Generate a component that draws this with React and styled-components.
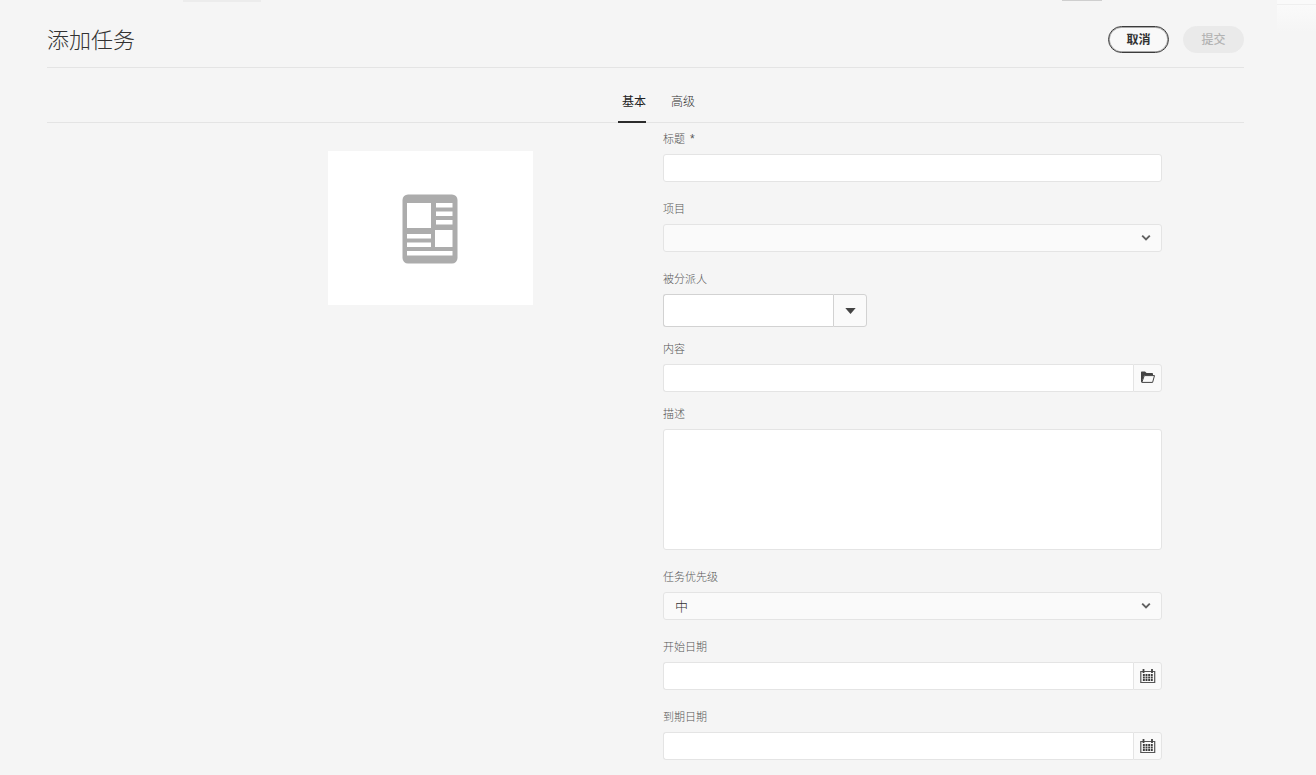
import React from "react";
import styled, { createGlobalStyle } from "styled-components";

const line = "#e4e4e4";
const ink = "#323232";

const GlobalStyle = createGlobalStyle`
  *, *::before, *::after { box-sizing: border-box; }
  body {
    margin: 0;
    background: #f5f5f5;
    color: ${ink};
    font-family: "Noto Sans CJK SC", "Liberation Sans", sans-serif;
    font-size: 12px;
    font-weight: 300;
  }
  button, input, select, textarea { font: inherit; color: inherit; }
`;

const Page = styled.div`
  position: relative;
  padding: 0 72px 14px 47px;
`;

const TopEdge = styled.div`
  position: absolute;
  top: 0;
  left: 0;
  right: 0;
  display: flex;
  align-items: flex-start;
  padding-left: 183px;
  pointer-events: none;
`;

const EdgeMark = styled.span`
  width: ${(p) => p.$width}px;
  height: ${(p) => p.$height}px;
  margin-left: ${(p) => (p.$end ? "auto" : 0)};
  background: ${(p) => p.$color};
`;

const EdgePanel = styled.span`
  width: 39px;
  height: 32px;
  margin-left: 175px;
  background: linear-gradient(#fafafa, #f5f5f5);
  border-top: 4px solid #fafafa;
  box-shadow: inset 0 1px #efefef;
`;

const Header = styled.header`
  display: flex;
  align-items: center;
  justify-content: space-between;
  height: 68px;
  padding-top: 12px;
  border-bottom: 1px solid ${line};
`;

const Title = styled.h1`
  margin: 0;
  padding-bottom: 4px;
  font-size: 22px;
  line-height: 32px;
  font-weight: 300;
`;

const Actions = styled.div`
  display: flex;
  gap: 14px;
`;

const PillButton = styled.button`
  width: 61px;
  height: 27px;
  padding: 0 0 2px;
  border: 1px solid #3c3c3c;
  border-radius: 14px;
  background: #f9f9f9;
  box-shadow: inset 0 0 0 1px #a8a8a8;
  color: ${ink};
  font-size: 12px;
  line-height: 16px;
  font-weight: 700;

  &:disabled {
    border-color: #eaeaea;
    background: #eaeaea;
    box-shadow: none;
    color: #b3b3b3;
    font-weight: 500;
  }
`;

const Tabs = styled.div`
  display: flex;
  justify-content: center;
  gap: 21px;
  height: 55px;
  padding-left: 22px;
  border-bottom: 1px solid ${line};
`;

const Tab = styled.button`
  height: 55px;
  padding: 13px 0 0 4px;
  border: 0;
  border-bottom: 2px solid ${(p) => (p["aria-selected"] ? "#2c2c2c" : "transparent")};
  background: none;
  font-size: 12px;
  line-height: 18px;
  font-weight: ${(p) => (p["aria-selected"] ? 400 : 300)};
  color: ${(p) => (p["aria-selected"] ? "#222" : "#333")};
`;

const Body = styled.main`
  display: grid;
  grid-template-columns: 616fr 499fr;
  padding: 7px 82px 0 0;
`;

const Preview = styled.div`
  display: flex;
  align-items: center;
  justify-content: center;
  justify-self: end;
  width: 205px;
  height: 154px;
  margin: 21px 130px 0 0;
  padding: 2px 1px 0 0;
  background: #fff;
`;

const Form = styled.form`
  min-width: 0;
`;

const Field = styled.div`
  display: flex;
  flex-direction: column;
  gap: 8px;
  margin-bottom: ${(p) => (p.$tight ? 13 : 18)}px;

  &:last-child { margin-bottom: 0; }
`;

const Label = styled.label`
  font-size: 11px;
  line-height: 16px;
  color: #555;
`;

const Required = styled.span`
  margin-left: 5px;
  font-family: "Liberation Sans", sans-serif;
  font-size: 12px;
  line-height: 12px;
`;

const Control = styled.div`
  position: relative;
  display: flex;
  width: ${(p) => (p.$compact ? "204px" : "100%")};
  height: ${(p) => (p.$compact ? 33 : 28)}px;
`;

const TextInput = styled.input`
  flex: 1;
  min-width: 0;
  padding: 0 11px;
  border: 1px solid ${(p) => (p.$strong ? "#d2d2d2" : line)};
  border-right-width: ${(p) => (p.$joined ? 0 : 1)}px;
  border-radius: ${(p) => (p.$joined ? "3px 0 0 3px" : "3px")};
  background: #fff;
`;

const SideButton = styled.button`
  display: flex;
  align-items: center;
  justify-content: center;
  width: ${(p) => (p.$strong ? 34 : 29)}px;
  padding: 0;
  border: 1px solid ${(p) => (p.$strong ? "#d2d2d2" : line)};
  border-radius: 0 3px 3px 0;
  background: #fafafa;
`;

const Select = styled.select`
  width: 100%;
  padding: 0 32px 2px 11px;
  border: 1px solid ${line};
  border-radius: 3px;
  background: #fafafa;
  appearance: none;
  font-size: 13px;
  opacity: 1;
`;

const SelectArrow = styled.svg`
  position: absolute;
  right: 11px;
  top: 10px;
  pointer-events: none;
`;

const TextArea = styled.textarea`
  display: block;
  width: 100%;
  height: 121px;
  padding: 6px 11px;
  border: 1px solid ${line};
  border-radius: 3px;
  background: #fff;
  resize: none;
`;

const Chevron = () => (
  <SelectArrow width="10" height="8" viewBox="0 0 10 8" aria-hidden="true">
    <path d="M1.2 1.6 5 5.4 8.800 1.6" fill="none" stroke="#606060" strokeWidth="1.9" />
  </SelectArrow>
);

const Caret = () => (
  <svg width="11" height="6" viewBox="0 0 11 6" aria-hidden="true">
    <path d="M0.3 0h10.4L5.5 6z" fill="#444" />
  </svg>
);

const Folder = () => (
  <svg width="16" height="14" viewBox="0 0 16 14" aria-hidden="true">
    <path d="M1 11V1.2Q1 .5 1.7.5H5l1.6 1.600h5.600q.8 0 .8.8V4.600H4.100L1.700 11z" fill="#444" />
    <path d="M4.300 4.600h10.200L12.600 11.400H1.800z" fill="#fafafa" stroke="#444" strokeLinejoin="round" />
  </svg>
);

const Calendar = () => (
  <svg width="16" height="14" viewBox="0 0 16 14" aria-hidden="true">
    <path d="M.8 2.500h13.900v11H.8z" fill="none" stroke="#555" strokeWidth="1.200" />
    <path d="M3.500 0v4M12 0v4" stroke="#444" strokeWidth="1.800" />
    <path d="M2.900 5.900h9.900M2.900 8.500h9.900M2.900 11.100h9.900" stroke="#3c3c3c" strokeWidth="2" strokeDasharray="1.900 .75" />
  </svg>
);

const Article = () => (
  <svg width="56" height="70" viewBox="0 0 56 70" aria-hidden="true">
    <rect x="0.5" y="0.5" width="55" height="69" rx="5.5" fill="#acacac" />
    <g fill="#fff">
      <path d="M5 9h24v25H5zM34 9h16.500v4.500H34zM34 17.500h16.500v4.500H34zM34 26h16.500v4.500H34z" />
      <path d="M5 40h24v4.500H5zM5 48.500h24v4.500H5zM33 36h17.500v17H33zM5 57h45.500v4.500H5z" />
    </g>
  </svg>
);

function DateField({ id, label }) {
  return (
    <Field>
      <Label htmlFor={id}>{label}</Label>
      <Control>
        <TextInput id={id} type="text" $joined />
        <SideButton type="button" aria-label={label}><Calendar /></SideButton>
      </Control>
    </Field>
  );
}

export default function App() {
  return (
    <>
      <GlobalStyle />
      <Page>
        <TopEdge aria-hidden="true">
          <EdgeMark $width={78} $height={2} $color="#ececec" />
          <EdgeMark $width={40} $height={1} $color="#cfcfcf" $end />
          <EdgePanel />
        </TopEdge>
        <Header>
          <Title>添加任务</Title>
          <Actions>
            <PillButton type="button">取消</PillButton>
            <PillButton type="submit" form="task" disabled>提交</PillButton>
          </Actions>
        </Header>
        <Tabs role="tablist">
          <Tab type="button" role="tab" aria-selected={true}>基本</Tab>
          <Tab type="button" role="tab" aria-selected={false}>高级</Tab>
        </Tabs>
        <Body>
          <Preview><Article /></Preview>
          <Form id="task">
            <Field>
              <Label htmlFor="title">标题<Required>*</Required></Label>
              <Control><TextInput id="title" type="text" /></Control>
            </Field>
            <Field>
              <Label htmlFor="project">项目</Label>
              <Control>
                <Select id="project"><option value="" /></Select>
                <Chevron />
              </Control>
            </Field>
            <Field $tight>
              <Label htmlFor="assignee">被分派人</Label>
              <Control $compact>
                <TextInput id="assignee" type="text" $joined $strong />
                <SideButton type="button" aria-label="被分派人" $strong><Caret /></SideButton>
              </Control>
            </Field>
            <Field $tight>
              <Label htmlFor="content">内容</Label>
              <Control>
                <TextInput id="content" type="text" $joined />
                <SideButton type="button" aria-label="内容"><Folder /></SideButton>
              </Control>
            </Field>
            <Field>
              <Label htmlFor="description">描述</Label>
              <TextArea id="description" />
            </Field>
            <Field>
              <Label htmlFor="priority">任务优先级</Label>
              <Control>
                <Select id="priority" defaultValue="medium">
                  <option value="medium">中</option>
                </Select>
                <Chevron />
              </Control>
            </Field>
            <DateField id="start" label="开始日期" />
            <DateField id="due" label="到期日期" />
          </Form>
        </Body>
      </Page>
    </>
  );
}
